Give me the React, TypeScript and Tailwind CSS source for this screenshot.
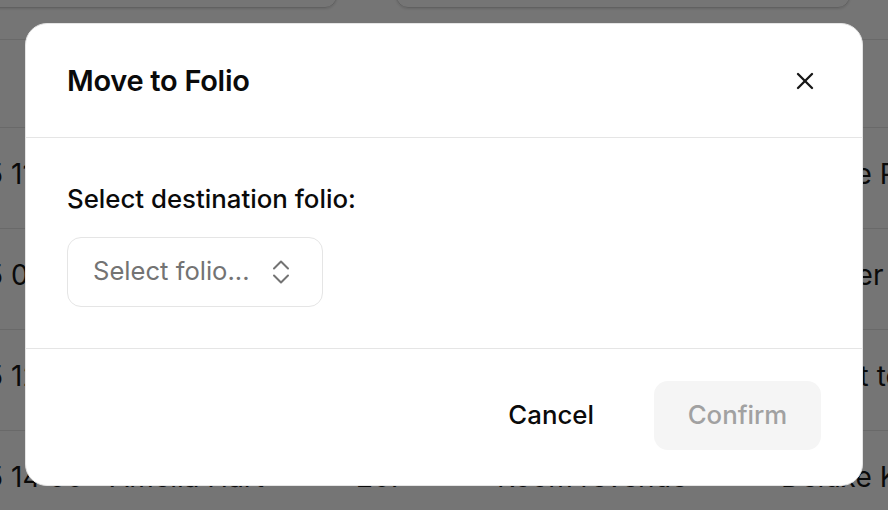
import { X } from 'lucide-react'

const ROWS = [
  { date: 'Mar 15', time: '11:20', guest: 'Liam Chen', room: '112', item: 'Room service', rate: 'Deluxe Room' },
  { date: 'Mar 15', time: '09:45', guest: 'Sofia Patel', room: '305', item: 'Minibar', rate: 'Premier Suite' },
  { date: 'Mar 15', time: '12:10', guest: 'Noah Berg', room: '118', item: 'Excursion', rate: 'Desert tour' },
  { date: 'Mar 15', time: '14:00', guest: 'Amelia Hart', room: '207', item: 'Room revenue', rate: 'Deluxe King' },
]

function Backdrop() {
  return (
    <div className="flex h-[510px] w-[888px] flex-col overflow-hidden bg-white text-[28px] text-neutral-900">
      <div className="flex h-[40px] shrink-0 items-end gap-[59px] border-b border-neutral-200 pb-[31px]">
        <div className="-ml-4 h-[40px] w-[353px] shrink-0 rounded-xl border border-neutral-300 shadow-sm" />
        <div className="h-[40px] w-[454px] shrink-0 rounded-xl border border-neutral-300 shadow-sm" />
        <div className="h-[40px] w-[80px] shrink-0 rounded-xl border border-neutral-300 shadow-sm" />
      </div>
      <div className="h-[88px] shrink-0 border-b border-neutral-200" />
      {ROWS.map(r => (
        <div key={r.time} className="flex h-[101px] shrink-0 items-center border-b border-neutral-200 pb-[8px]">
          <span className="-ml-[103px] w-[106px] shrink-0 whitespace-nowrap text-right">{r.date}</span>
          <span className="ml-[8px] w-[99px] shrink-0 whitespace-nowrap">{r.time}</span>
          <span className="w-[246px] shrink-0 whitespace-nowrap">{r.guest}</span>
          <span className="w-[141px] shrink-0">{r.room}</span>
          <span className="w-[284px] shrink-0 whitespace-nowrap">{r.item}</span>
          <span className="shrink-0 whitespace-nowrap">{r.rate}</span>
        </div>
      ))}
    </div>
  )
}

function UpDown() {
  return (
    <svg width="18" height="26" viewBox="0 0 18 26" fill="none" stroke="currentColor" strokeWidth="2" strokeLinecap="round" strokeLinejoin="round">
      <path d="M2 9.5 9 2.5l7 7" />
      <path d="M2 16.5l7 7 7-7" />
    </svg>
  )
}

export default function App() {
  return (
    <div className="relative h-[510px] w-[888px] overflow-hidden font-['Inter',sans-serif]">
      <Backdrop />
      <div className="absolute inset-0 bg-black/[0.54]" />
      <div className="absolute left-[25px] top-[23px] flex h-[463px] w-[838px] flex-col rounded-[22px] border border-neutral-200 bg-white">
        <div className="flex h-[114px] items-center justify-between border-b border-neutral-200 px-[41px]">
          <h2 className="text-[29px] font-semibold tracking-[-0.01em] text-neutral-950">Move to Folio</h2>
          <button className="mr-[2px] text-neutral-900">
            <X className="h-[28px] w-[28px]" strokeWidth={2} />
          </button>
        </div>
        <div className="flex h-[211px] flex-col border-b border-neutral-200 px-[41px] pt-[42px]">
          <label className="text-[25.8px] font-medium text-neutral-950">Select destination folio:</label>
          <button className="mt-[18px] flex h-[70px] w-[256px] items-center justify-between rounded-[14px] border-[1.5px] border-neutral-200 pl-[25px] pr-[32px] text-[25.6px] text-neutral-500">
            <span>Select folio...</span>
            <span className="text-neutral-500"><UpDown /></span>
          </button>
        </div>
        <div className="flex flex-1 items-start justify-end gap-[32px] px-[41px] pt-[32px]">
          <button className="flex h-[69px] items-center px-[28px] text-[25.8px] font-medium text-neutral-950">Cancel</button>
          <button disabled className="flex h-[69px] w-[167px] items-center justify-center rounded-[14px] bg-neutral-100 text-[25.8px] font-medium text-neutral-400">Confirm</button>
        </div>
      </div>
    </div>
  )
}
